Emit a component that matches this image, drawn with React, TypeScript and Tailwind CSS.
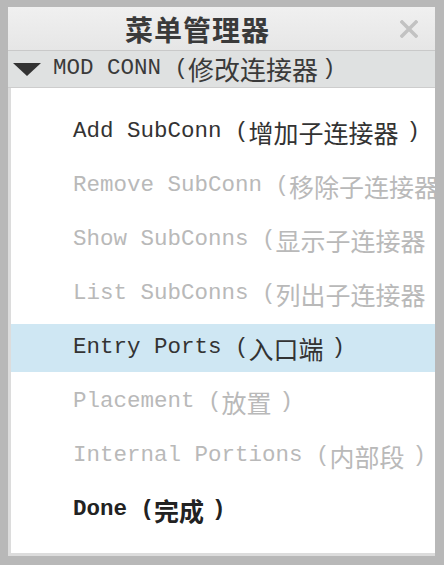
const items = [
  { en: "Add SubConn", zh: "增加子连接器", state: "active" },
  { en: "Remove SubConn", zh: "移除子连接器", state: "disabled" },
  { en: "Show SubConns", zh: "显示子连接器", state: "disabled" },
  { en: "List SubConns", zh: "列出子连接器", state: "disabled" },
  { en: "Entry Ports", zh: "入口端", state: "selected" },
  { en: "Placement", zh: "放置", state: "disabled" },
  { en: "Internal Portions", zh: "内部段", state: "disabled" },
  { en: "Done", zh: "完成", state: "bold" },
];

function MenuRow({ item }: { item: any }) {
  const color =
    item.state === "disabled"
      ? "text-[#b9b9b9]"
      : item.state === "bold"
      ? "text-[#222222] font-bold"
      : "text-[#333333]";
  const bg = item.state === "selected" ? "bg-[#cfe7f3]" : "";
  return (
    <div className={`h-[48px] shrink-0 flex items-center pl-[62px] whitespace-nowrap ${bg} ${color}`}>
      <span className="font-['Liberation_Mono',monospace] text-[22.5px]">{item.en} (</span>
      <span className="font-['Noto_Sans_CJK_SC',sans-serif] text-[25px] leading-none">{item.zh}</span>
      <span className="font-['Liberation_Mono',monospace] text-[22.5px] ml-[8px]">)</span>
    </div>
  );
}

export default function App() {
  return (
    <div className="w-[444px] h-[565px] bg-[#b8b8b8] pt-[7px] pl-[8px] pr-[9px] pb-[9px] flex overflow-hidden">
      <div className="flex-1 min-w-0 flex flex-col bg-[#dcdcdc] overflow-hidden">
        {/* title bar */}
        <div className="relative h-[44px] shrink-0 flex items-center justify-center pr-[48px] bg-gradient-to-b from-[#f0f0f0] to-[#e6e6e6] border-b border-[#c9c9c9]">
          <span className="font-['Noto_Sans_CJK_SC',sans-serif] font-bold text-[28px] text-[#3a3a3a] tracking-[1px]">
            菜单管理器
          </span>
          <svg className="absolute right-[17px] top-[13px]" width="18" height="18" viewBox="0 0 18 18">
            <path d="M2 2 L16 16 M16 2 L2 16" stroke="#c2c2c2" strokeWidth="3.5" strokeLinecap="square" />
          </svg>
        </div>
        {/* section header */}
        <div className="h-[37px] shrink-0 flex items-center bg-[#dfe1e1] border-b border-[#cdcdcd] pl-[5px] whitespace-nowrap text-[#3a3a3a]">
          <svg width="28" height="15" viewBox="0 0 28 15" className="mr-[12px] shrink-0">
            <path d="M0 1 L28 1 L14 14 Z" fill="#333333" />
          </svg>
          <span className="font-['Liberation_Mono',monospace] text-[22.5px]">MOD CONN (</span>
          <span className="font-['Noto_Sans_CJK_SC',sans-serif] text-[26px] leading-none">修改连接器</span>
          <span className="font-['Liberation_Mono',monospace] text-[22.5px] ml-[4px]">)</span>
        </div>
        {/* menu list */}
        <div className="flex-1 min-w-0 bg-white ml-[3px] mb-[3px] overflow-hidden pt-[20px] flex flex-col gap-[6px]">
          {items.map((item, idx) => (
            <MenuRow item={item} key={idx} />
          ))}
        </div>
      </div>
    </div>
  );
}
